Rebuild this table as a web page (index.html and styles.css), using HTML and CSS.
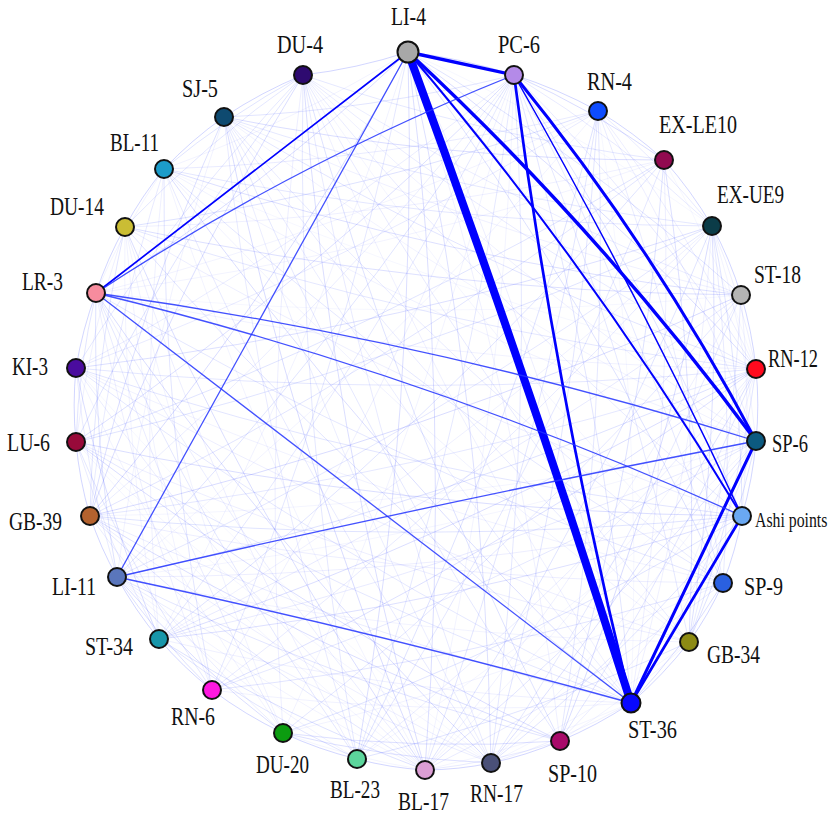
FILE: index.html
```html
<!DOCTYPE html>
<html lang="en">
<head>
<meta charset="utf-8">
<title>Acupoint co-occurrence network</title>
<link rel="stylesheet" href="styles.css">
</head>
<body>
<svg class="chart" width="835" height="819" viewBox="0 0 835 819" xmlns="http://www.w3.org/2000/svg">
  <g id="mesh" class="mesh"></g>
  <g class="strong">
    <path class="w8" d="M408,52 Q527,375 631,703"/>
    <path class="w35" d="M408,52 Q600,230 756,441"/>
    <path class="w3" d="M514,75 Q653,246 756,441"/>
    <path class="w2" d="M408,52 Q594,270 742,516"/>
    <path class="w15" d="M514,75 Q637,291 742,516"/>
    <path class="w28" d="M514,75 Q555,392 631,703"/>
    <path class="w35" d="M408,52 L514,75"/>
    <path class="w3" d="M631,703 L756,441"/>
    <path class="w28" d="M631,703 L742,516"/>
    <path class="w18" d="M96,293 L408,52"/>
    <path class="thin" d="M96,293 Q294,163 514,75"/>
    <path class="thin" d="M96,293 Q432,340 756,441"/>
    <path class="thin" d="M96,293 Q429,374 742,516"/>
    <path class="thin" d="M96,293 L631,703"/>
    <path class="thin" d="M117,577 L408,52"/>
    <path class="thin" d="M117,577 Q435,503 756,441"/>
    <path class="thin" d="M117,577 Q376,632 631,703"/>
  </g>
  <g id="nodes" class="nodes">
    <circle class="node big" cx="408" cy="52" r="10.5" fill="#a8a8a8"/>
    <circle class="node" cx="514" cy="75" r="9" fill="#b48ae8"/>
    <circle class="node" cx="598" cy="111" r="9" fill="#0e4cff"/>
    <circle class="node" cx="664" cy="160" r="9" fill="#910a50"/>
    <circle class="node" cx="712" cy="226" r="9" fill="#0b3c48"/>
    <circle class="node" cx="741" cy="295" r="9" fill="#b4b4b4"/>
    <circle class="node" cx="756" cy="369" r="9" fill="#ff0a1e"/>
    <circle class="node" cx="756" cy="441" r="9" fill="#0c5a80"/>
    <circle class="node" cx="742" cy="516" r="9" fill="#6aa8f2"/>
    <circle class="node" cx="723" cy="583" r="9" fill="#2a60e0"/>
    <circle class="node" cx="689" cy="642" r="9" fill="#8c8a14"/>
    <circle class="node" cx="631" cy="703" r="9.5" fill="#0808ff"/>
    <circle class="node" cx="560" cy="741" r="9" fill="#a80a6a"/>
    <circle class="node" cx="491" cy="763" r="9" fill="#4a5078"/>
    <circle class="node" cx="425" cy="770" r="9" fill="#dc9ed4"/>
    <circle class="node" cx="357" cy="759" r="9" fill="#5cd69c"/>
    <circle class="node" cx="283" cy="733" r="9" fill="#0c9c10"/>
    <circle class="node" cx="212" cy="690" r="9" fill="#ff18e0"/>
    <circle class="node" cx="159" cy="639" r="9" fill="#1896aa"/>
    <circle class="node" cx="117" cy="577" r="9" fill="#5a76bc"/>
    <circle class="node" cx="90" cy="516" r="9" fill="#b4622e"/>
    <circle class="node" cx="76" cy="442" r="9" fill="#980a3a"/>
    <circle class="node" cx="76" cy="368" r="9" fill="#4a0c9e"/>
    <circle class="node" cx="96" cy="293" r="9" fill="#f78c9e"/>
    <circle class="node" cx="125" cy="227" r="9" fill="#cabd34"/>
    <circle class="node" cx="164" cy="169" r="9" fill="#1c9cca"/>
    <circle class="node" cx="224" cy="117" r="9" fill="#0e4a70"/>
    <circle class="node" cx="303" cy="75" r="9" fill="#2e0a70"/>
  </g>
  <g class="labels">
    <text class="label" x="391" y="25" textLength="35" lengthAdjust="spacingAndGlyphs">LI-4</text>
    <text class="label" x="498" y="53" textLength="42" lengthAdjust="spacingAndGlyphs">PC-6</text>
    <text class="label" x="587" y="90" textLength="45" lengthAdjust="spacingAndGlyphs">RN-4</text>
    <text class="label" x="659" y="133" textLength="78" lengthAdjust="spacingAndGlyphs">EX-LE10</text>
    <text class="label" x="717" y="203" textLength="67" lengthAdjust="spacingAndGlyphs">EX-UE9</text>
    <text class="label" x="754" y="283" textLength="47" lengthAdjust="spacingAndGlyphs">ST-18</text>
    <text class="label" x="768" y="367" textLength="50" lengthAdjust="spacingAndGlyphs">RN-12</text>
    <text class="label" x="772" y="452" textLength="36" lengthAdjust="spacingAndGlyphs">SP-6</text>
    <text class="label small" transform="translate(755 527) scale(0.79 1)" x="0" y="0">Ashi points</text>
    <text class="label" x="744" y="595" textLength="39" lengthAdjust="spacingAndGlyphs">SP-9</text>
    <text class="label" x="707" y="663" textLength="53" lengthAdjust="spacingAndGlyphs">GB-34</text>
    <text class="label" x="628" y="738" textLength="49" lengthAdjust="spacingAndGlyphs">ST-36</text>
    <text class="label" x="548" y="782" textLength="49" lengthAdjust="spacingAndGlyphs">SP-10</text>
    <text class="label" x="470" y="802" textLength="53" lengthAdjust="spacingAndGlyphs">RN-17</text>
    <text class="label" x="398" y="810" textLength="51" lengthAdjust="spacingAndGlyphs">BL-17</text>
    <text class="label" x="330" y="798" textLength="50" lengthAdjust="spacingAndGlyphs">BL-23</text>
    <text class="label" x="256" y="773" textLength="53" lengthAdjust="spacingAndGlyphs">DU-20</text>
    <text class="label" x="171" y="725" textLength="44" lengthAdjust="spacingAndGlyphs">RN-6</text>
    <text class="label" x="85" y="655" textLength="48" lengthAdjust="spacingAndGlyphs">ST-34</text>
    <text class="label" x="52" y="595" textLength="44" lengthAdjust="spacingAndGlyphs">LI-11</text>
    <text class="label" x="9" y="530" textLength="53" lengthAdjust="spacingAndGlyphs">GB-39</text>
    <text class="label" x="7" y="451" textLength="43" lengthAdjust="spacingAndGlyphs">LU-6</text>
    <text class="label" x="12" y="375" textLength="36" lengthAdjust="spacingAndGlyphs">KI-3</text>
    <text class="label" x="22" y="290" textLength="41" lengthAdjust="spacingAndGlyphs">LR-3</text>
    <text class="label" x="50" y="215" textLength="54" lengthAdjust="spacingAndGlyphs">DU-14</text>
    <text class="label" x="110" y="151" textLength="49" lengthAdjust="spacingAndGlyphs">BL-11</text>
    <text class="label" x="182" y="97" textLength="36" lengthAdjust="spacingAndGlyphs">SJ-5</text>
    <text class="label" x="277" y="53" textLength="46" lengthAdjust="spacingAndGlyphs">DU-4</text>
  </g>
</svg>
<script src="script.js"></script>
</body>
</html>
```

FILE: styles.css
```css
html, body {
  margin: 0;
  padding: 0;
  background: #ffffff;
}

.chart {
  display: block;
}

.mesh path {
  fill: none;
  stroke: #4a5cff;
  stroke-width: 1;
}

.strong path {
  fill: none;
  stroke: #0000ff;
  stroke-linecap: round;
}

.strong .w8 { stroke-width: 8; }
.strong .w35 { stroke-width: 3.4; }
.strong .w3 { stroke-width: 3; }
.strong .w28 { stroke-width: 2.7; }
.strong .w2 { stroke-width: 2; }
.strong .w18 { stroke-width: 1.7; }
.strong .w15 { stroke-width: 1.5; }
.strong .thin {
  stroke: #2233ff;
  stroke-width: 1.3;
  stroke-opacity: 0.85;
}

.node {
  stroke: #111111;
  stroke-width: 2;
}

.label {
  font-family: "Liberation Serif", "Times New Roman", serif;
  font-size: 25px;
  fill: #111111;
}

.label.small {
  font-size: 20px;
}
```

FILE: script.js
```js
(function () {
  var ns = 'http://www.w3.org/2000/svg';
  var circles = document.querySelectorAll('#nodes circle');
  var pts = [];
  for (var k = 0; k < circles.length; k++) {
    pts.push([+circles[k].getAttribute('cx'), +circles[k].getAttribute('cy')]);
  }
  var seed = 12345;
  function rnd() {
    seed = (seed * 16807) % 2147483647;
    return seed / 2147483647;
  }
  var mesh = document.getElementById('mesh');
  var n = pts.length;
  for (var i = 0; i < n; i++) {
    for (var j = i + 1; j < n; j++) {
      var adjacent = (j === i + 1) || (i === 0 && j === n - 1);
      var r = rnd();
      if (!adjacent && r > 0.62) continue;
      var a = pts[i], b = pts[j];
      var dx = b[0] - a[0], dy = b[1] - a[1];
      var len = Math.sqrt(dx * dx + dy * dy);
      var bow = 0.05 * len;
      var cx = (a[0] + b[0]) / 2 + (dy / len) * bow;
      var cy = (a[1] + b[1]) / 2 - (dx / len) * bow;
      var p = document.createElementNS(ns, 'path');
      p.setAttribute('d', 'M' + a[0] + ',' + a[1] + ' Q' + cx.toFixed(1) + ',' + cy.toFixed(1) + ' ' + b[0] + ',' + b[1]);
      var op = adjacent ? 0.25 : 0.05 + rnd() * 0.16;
      p.setAttribute('stroke-opacity', op.toFixed(2));
      mesh.appendChild(p);
    }
  }
})();
```
